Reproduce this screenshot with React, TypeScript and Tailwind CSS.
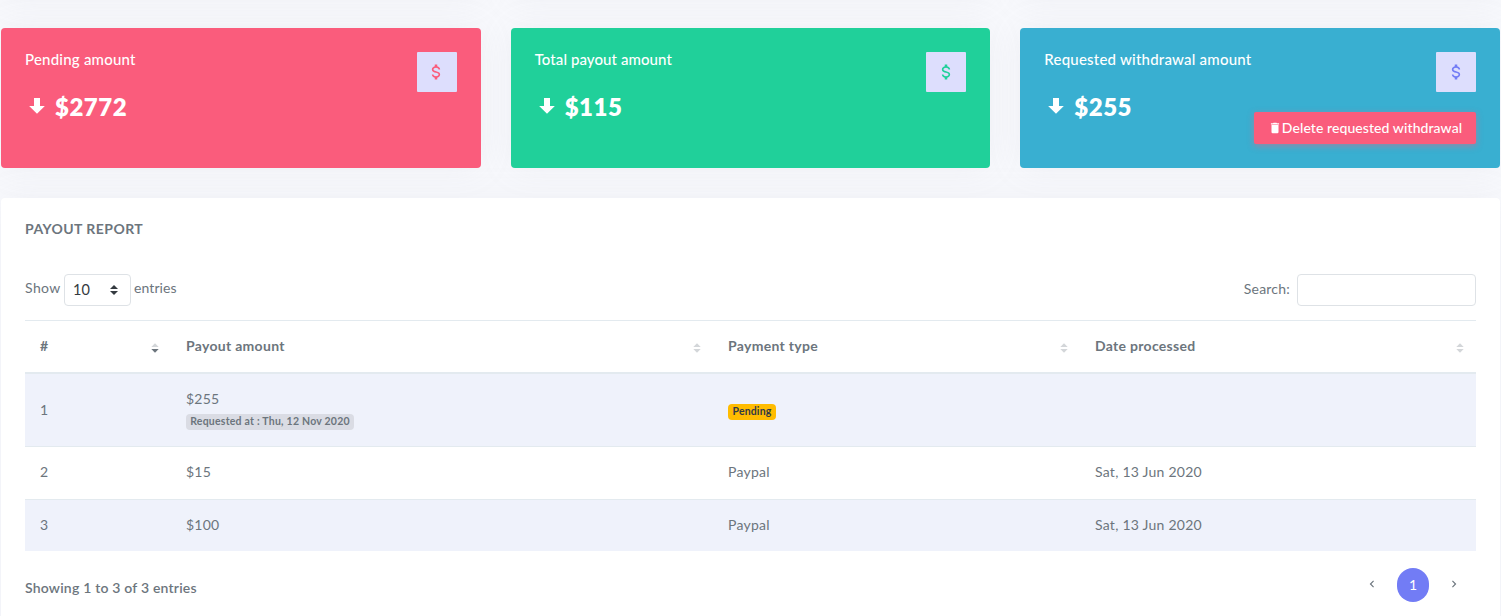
import React from "react";

const DOLLAR =
  "M7,15H9C9,16.08 10.37,17 12,17C13.63,17 15,16.08 15,15C15,13.9 13.96,13.5 11.76,12.97C9.64,12.44 7,11.78 7,9C7,7.21 8.47,5.69 10.5,5.18V3H13.5V5.18C15.53,5.69 17,7.21 17,9H15C15,7.92 13.63,7 12,7C10.37,7 9,7.92 9,9C9,10.1 10.04,10.5 12.24,11.03C14.36,11.56 17,12.22 17,15C17,16.79 15.53,18.31 13.5,18.82V21H10.5V18.82C8.47,18.31 7,16.79 7,15Z";
const ARROW_DOWN = "M9,4H15V12H19.84L12,19.84L4.16,12H9V4Z";
const TRASH =
  "M19,4H15.5L14.5,3H9.5L8.5,4H5V6H19M6,19A2,2 0 0,0 8,21H16A2,2 0 0,0 18,19V7H6V19Z";
const CHEVRON_LEFT =
  "M15.41,16.58L10.83,12L15.41,7.41L14,6L8,12L14,18L15.41,16.58Z";
const CHEVRON_RIGHT =
  "M8.59,16.58L13.17,12L8.59,7.41L10,6L16,12L10,18L8.59,16.58Z";

function Icon({ d, className }: { d: string; className: string }) {
  return (
    <svg viewBox="0 0 24 24" fill="currentColor" className={className}>
      <path d={d} />
    </svg>
  );
}

type StatProps = {
  title: string;
  titleClass: string;
  amount: string;
  bg: string;
  iconColor: string;
  children?: React.ReactNode;
};

function StatCard({ title, titleClass, amount, bg, iconColor, children }: StatProps) {
  return (
    <div
      className={`flex h-[140px] flex-1 justify-between rounded p-6 text-white shadow-[0_0_35px_0_rgba(154,161,171,0.1)] ${bg}`}
    >
      <div className="whitespace-nowrap">
        <h5 className={`-mt-px text-[15px] leading-4 font-medium ${titleClass}`}>{title}</h5>
        <h3 className="mt-6 flex h-8 items-center text-2xl font-extrabold">
          <Icon d={ARROW_DOWN} className="mr-1.5 -mt-0.5 size-6" />
          <span className="tracking-[0.5px]">{amount}</span>
        </h3>
      </div>
      <div className="flex flex-col items-end">
        <div
          className={`flex size-10 items-center justify-center rounded-[1px] bg-[#dddefd] ${iconColor}`}
        >
          <Icon d={DOLLAR} className="mr-px size-5" />
        </div>
        {children}
      </div>
    </div>
  );
}

function SortIcon({ active }: { active?: boolean }) {
  return (
    <svg viewBox="0 0 8 10" className="mt-[5px] h-2.5 w-2 shrink-0">
      <path d="M0.3 4 L4 0.2 L7.7 4Z" fill="#d3d6d9" />
      <path d="M0.3 6 L4 9.8 L7.7 6Z" fill={active ? "#6c757d" : "#d3d6d9"} />
    </svg>
  );
}

function HeadCell({ label, width, active }: { label: string; width: string; active?: boolean }) {
  return (
    <th className={`pt-0 pr-3 pb-0.5 pl-[15px] text-left font-bold ${width}`}>
      <div className="flex items-center justify-between">
        <span className="tracking-[0.3px]">{label}</span>
        <SortIcon active={active} />
      </div>
    </th>
  );
}

export default function App() {
  return (
    <div className="h-[616px] w-[1501px] overflow-hidden bg-[#f8f9fd] px-px font-['Lato','Open_Sans',sans-serif] text-sm text-[#6c757d]">
      <div className="-mt-[142px] flex gap-[30px]">
        <div className="h-[140px] flex-1 rounded bg-white shadow-[0_0_35px_0_rgba(154,161,171,0.1)]" />
        <div className="h-[140px] flex-1 rounded bg-white shadow-[0_0_35px_0_rgba(154,161,171,0.1)]" />
        <div className="h-[140px] flex-1 rounded bg-white shadow-[0_0_35px_0_rgba(154,161,171,0.1)]" />
      </div>
      <div className="mt-[30px] flex gap-[30px]">
        <StatCard title="Pending amount" titleClass="tracking-[0.22px]" amount="$2772" bg="bg-[#fa5c7c]" iconColor="text-[#fa5c7c]" />
        <StatCard title="Total payout amount" titleClass="tracking-[0.08px]" amount="$115" bg="bg-[#20d09a]" iconColor="text-[#20d09a]" />
        <StatCard title="Requested withdrawal amount" titleClass="tracking-[0.22px]" amount="$255" bg="bg-[#39afd1]" iconColor="text-[#727cf5]">
          <button className="mt-5 -ml-20 flex h-8 w-[222px] shrink-0 items-center justify-center rounded-[2px] bg-[#fa5c7c] font-medium whitespace-nowrap shadow-[0_2px_6px_0_rgba(250,92,124,0.5)]">
            <Icon d={TRASH} className="size-[14px]" />
            <span className="tracking-[0.08px]">Delete requested withdrawal</span>
          </button>
        </StatCard>
      </div>

      <div className="mt-[30px] h-[500px] rounded bg-white px-6 pt-[23px] shadow-[0_0_35px_0_rgba(154,161,171,0.1)]">
        <h4 className="h-4 leading-4 font-bold tracking-[0.45px]">PAYOUT REPORT</h4>

        <div className="mt-[37px] flex h-8 items-center justify-between">
          <div className="flex items-center">
            <span className="-mt-1 w-[39px] tracking-[0.4px]">Show</span>
            <div className="flex h-8 w-[67px] items-center justify-between rounded border border-[#dee2e6] pr-3 pl-2 text-[14.5px] text-[#343a40]">
              <span>10</span>
              <svg viewBox="0 0 8 10" className="h-2.5 w-2">
                <path d="M0 4 L4 0 L8 4Z M0 6 L4 10 L8 6Z" fill="#343a40" />
              </svg>
            </div>
            <span className="-mt-1 ml-[3px] tracking-[0.1px]">entries</span>
          </div>
          <div className="flex items-center">
            <span className="-mt-0.5 tracking-[0.22px]">Search:</span>
            <div className="ml-[7px] h-8 w-[179px] rounded border border-[#dee2e6]" />
          </div>
        </div>

        <table className="mt-[14px] w-[1451px] table-fixed border-separate border-spacing-0 tracking-[0.25px]">
          <thead>
            <tr className="h-[54px] [&>th]:border-t [&>th]:border-b-2 [&>th]:border-[#e3eaef]">
              <HeadCell label="#" width="w-[146px]" active />
              <HeadCell label="Payout amount" width="w-[542px]" />
              <HeadCell label="Payment type" width="w-[367px]" />
              <HeadCell label="Date processed" width="w-[396px]" />
            </tr>
          </thead>
          <tbody className="[&_td]:pt-0 [&_td]:pr-0 [&_td]:pb-0.5 [&_td]:pl-[15px]">
            <tr className="h-[72px] bg-[#eff2fb]">
              <td>
                <div className="pt-0.5">1</div>
              </td>
              <td>
                <div className="flex flex-col items-start pt-0.5">
                  <span className="-mt-px leading-5">$255</span>
                  <span className="mt-[5px] flex h-4 w-[168px] items-center justify-center rounded-[4px] bg-[#dadce4] pb-px text-[10.5px] font-bold tracking-[0.23px] whitespace-nowrap">
                    Requested at : Thu, 12 Nov 2020
                  </span>
                </div>
              </td>
              <td>
                <span className="mt-[5px] flex h-4 w-12 items-center justify-center rounded-[4px] bg-[#ffbc00] pb-px text-[10.5px] font-bold tracking-[0.15px] text-[#313a46]">
                  Pending
                </span>
              </td>
              <td />
            </tr>
            <tr className="h-[53px] [&>td]:border-t [&>td]:border-[#e3eaef]">
              <td>2</td>
              <td>$15</td>
              <td>Paypal</td>
              <td>Sat, 13 Jun 2020</td>
            </tr>
            <tr className="h-[52px] bg-[#eff2fb] [&>td]:border-t [&>td]:border-[#e3eaef]">
              <td>3</td>
              <td>$100</td>
              <td>Paypal</td>
              <td>Sat, 13 Jun 2020</td>
            </tr>
          </tbody>
        </table>

        <div className="mt-[17px] flex items-start justify-between">
          <span className="mt-2.5 font-semibold tracking-[0.2px]">Showing 1 to 3 of 3 entries</span>
          <div className="mr-[15px] flex items-start">
            <Icon d={CHEVRON_LEFT} className="mt-[9px] size-[14px]" />
            <span className="mx-[18px] flex h-[34px] w-8 items-center justify-center rounded-full bg-[#727cf5] pb-px text-white">1</span>
            <Icon d={CHEVRON_RIGHT} className="mt-[9px] size-[14px]" />
          </div>
        </div>
      </div>
    </div>
  );
}
